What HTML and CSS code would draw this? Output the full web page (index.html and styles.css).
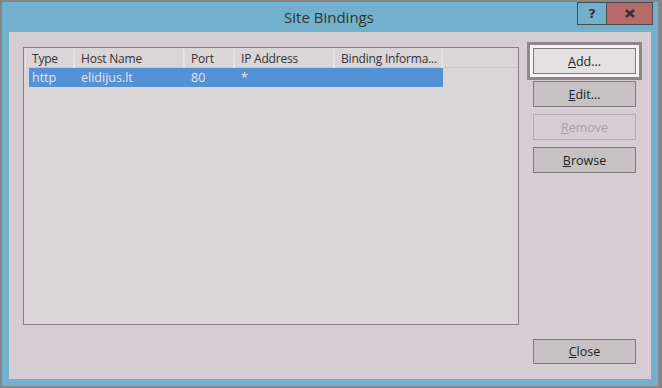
FILE: index.html
```html
<!DOCTYPE html>
<html lang="en">

<head>
    <meta charset="UTF-8">
    <meta name="viewport" content="width=device-width, initial-scale=1.0">
    <title>Site Bindings</title>
    <link rel="stylesheet" href="styles.css">
</head>

<body>
    <div class="window">
        <div class="titlebar">
            <span></span>
            <span class="title">Site Bindings</span>
            <div class="caption-buttons">
                <div class="cap-btn help">?</div>
                <div class="cap-btn close">
                    <svg width="10" height="9" viewBox="0 0 10 9">
                        <path d="M1 1 L9 8 M9 1 L1 8" stroke="#333" stroke-width="2.4" fill="none"/>
                    </svg>
                </div>
            </div>
        </div>

        <div class="client">
            <div class="listbox">
                <div class="header">
                    <div class="hcell">Type</div>
                    <div class="hcell">Host Name</div>
                    <div class="hcell">Port</div>
                    <div class="hcell">IP Address</div>
                    <div class="hcell">Binding Informa...</div>
                </div>
                <div class="row selected">
                    <div class="cell first">http</div>
                    <div class="cell">elidijus.lt</div>
                    <div class="cell">80</div>
                    <div class="cell">*</div>
                    <div class="cell"></div>
                </div>
            </div>

            <div class="buttons">
                <button class="btn focused"><u>A</u>dd...</button>
                <button class="btn"><u>E</u>dit...</button>
                <button class="btn disabled"><u>R</u>emove</button>
                <button class="btn"><u>B</u>rowse</button>
                <button class="btn close-btn"><u>C</u>lose</button>
            </div>
        </div>
    </div>
</body>

</html>
```

FILE: styles.css
```css
body {
    margin: 0;
    background-color: #8a8489;
    font-family: 'Open Sans', 'Noto Sans', sans-serif;
}

.window {
    width: 662px;
    height: 388px;
    box-sizing: border-box;
    border-top: 2px solid #8a8489;
    border-left: 2px solid #8a8489;
    border-right: 4px solid #8a8489;
    border-bottom: 2px solid #8a8489;
    background-color: #72b1cb;
    padding: 0 7px 7px 7px;
    display: flex;
    flex-direction: column;
}

.titlebar {
    height: 30px;
    display: grid;
    grid-template-columns: 1fr auto 1fr;
    align-items: center;
    margin: 0 -7px;
}

.title {
    font-size: 15px;
    color: #333;
    padding-right: 2px;
}

.caption-buttons {
    justify-self: end;
    align-self: start;
    display: flex;
    margin-right: 5px;
}

.cap-btn {
    height: 21px;
    border: 1px solid #4a4a4c;
    display: flex;
    align-items: center;
    justify-content: center;
    font-weight: bold;
    color: #333;
    font-family: 'DejaVu Sans', sans-serif;
}

.help {
    width: 28px;
    font-size: 13px;
    border-right: none;
}

.close {
    width: 45px;
    background-color: #b66a69;
}

.client {
    flex: 1;
    background-color: #d6ccd3;
    padding: 15px 15px 15px 14px;
    display: flex;
}

.listbox {
    width: 497px;
    height: 278px;
    box-sizing: border-box;
    border: 1px solid #848084;
    background-color: #dad5d7;
    padding-top: 1px;
}

.header {
    display: grid;
    grid-template-columns: 50px 110px 50px 100px 108px;
    margin-left: 1px;
    height: 18px;
    border-bottom: 1px solid #c9c4c7;
}

.hcell {
    font-size: 12px;
    letter-spacing: -0.2px;
    color: #333;
    padding-left: 6px;
    line-height: 19px;
    border-right: 2px solid #e6e2e4;
    white-space: nowrap;
}

.hcell:first-child {
    border-left: 1px solid #e6e2e4;
}

.row {
    display: grid;
    grid-template-columns: 46px 110px 50px 100px 108px;
    margin-left: 5px;
    width: 414px;
    height: 19px;
}

.selected {
    background-color: #5491d5;
}

.cell {
    font-size: 12.5px;
    color: #e4e6ee;
    padding-left: 6px;
    line-height: 19px;
}

.cell.first {
    padding-left: 3px;
}

.buttons {
    margin-left: 14px;
    padding-top: 1px;
    display: flex;
    flex-direction: column;
    gap: 7px;
}

.btn {
    width: 103px;
    height: 26px;
    border: 1px solid #7e7a7c;
    background-color: #c6c2c4;
    font-family: 'Open Sans', 'Noto Sans', sans-serif;
    font-size: 12.5px;
    color: #222;
    padding: 0;
}

.focused {
    background-color: #e3e0e2;
    box-shadow: 0 0 0 3px #f7f2f6, 0 0 0 6px #8f878c;
}

.disabled {
    background-color: #d6ccd3;
    border-color: #b4acb1;
    color: #a8a0a5;
}

.close-btn {
    margin-top: auto;
    height: 25px;
}
```
